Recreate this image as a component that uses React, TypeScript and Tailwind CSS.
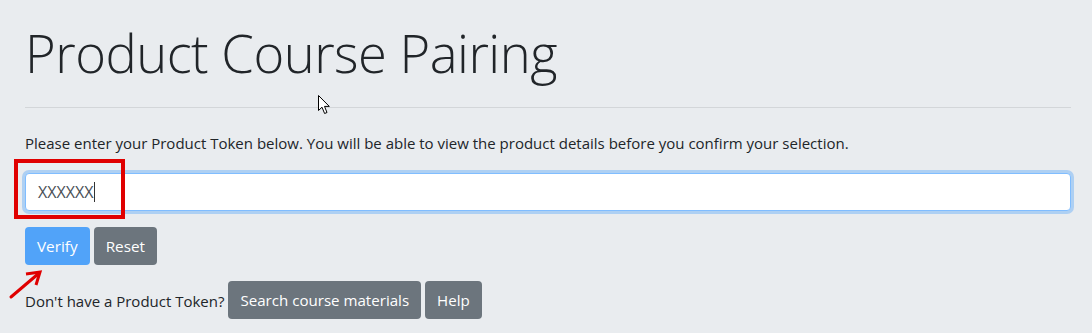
export default function App() {
  return (
    <div
      className="relative min-h-screen bg-[#e9ecef] pl-[25px] pr-[21px] pt-[21px] text-[#212529]"
      style={{ fontFamily: '"Open Sans", "Noto Sans", sans-serif' }}
    >
      <h1 className="text-[52.5px] font-light leading-[1.2] tracking-[-0.5px] text-[#212529]">
        Product Course Pairing
      </h1>
      <hr className="mt-[23px] mb-[25px] border-t border-[#d3d6d9]" />
      <p className="text-[15px] leading-[20px]">
        Please enter your Product Token below. You will be able to view the product details before you confirm your selection.
      </p>

      <div className="relative mt-[20px]">
        <div className="flex h-[38px] items-center rounded-[4px] border border-[#80bdff] bg-white px-[12px] shadow-[0_0_0_3px_rgba(0,123,255,0.25)]">
          <span className="text-[16px] text-[#495057]">XXXXXX</span>
          <span className="ml-[1px] h-[20px] w-[1px] bg-[#333]" />
        </div>
        <div className="absolute left-[-11px] top-[-14px] h-[60px] w-[111px] border-[4px] border-[#e00000]" />
      </div>

      <div className="mt-[16px] flex gap-[4px]">
        <button className="h-[38px] rounded-[4px] bg-[#51a3f9] px-[12px] text-[15.3px] text-white">
          Verify
        </button>
        <button className="h-[38px] rounded-[4px] bg-[#6c757d] px-[12px] text-[15.3px] text-white">
          Reset
        </button>
      </div>

      <div className="relative mt-[16px] flex items-center gap-[4px]">
        <span className="mt-[2px] text-[15px]">Don't have a Product Token?</span>
        <button className="h-[38px] rounded-[4px] bg-[#6c757d] px-[12px] text-[15.1px] text-white">
          Search course materials
        </button>
        <button className="h-[38px] rounded-[4px] bg-[#6c757d] px-[12px] text-[15.1px] text-white">
          Help
        </button>
        <svg
          className="absolute left-[-17px] top-[-12px]"
          width="36"
          height="32"
          viewBox="0 0 36 32"
        >
          <line x1="3" y1="28" x2="30" y2="5" stroke="#e00000" strokeWidth="3" strokeLinecap="round" />
          <path d="M18 5 L32 3 L28 16" fill="none" stroke="#e00000" strokeWidth="3" strokeLinejoin="miter" />
        </svg>
      </div>

      <svg
        className="absolute left-[318px] top-[95px]"
        width="13"
        height="20"
        viewBox="0 0 13 20"
      >
        <path
          d="M0.5 0.5 L0.5 15.5 L4 12.2 L6.6 18.5 L9 17.5 L6.5 11.4 L11.3 11.4 Z"
          fill="#fff"
          stroke="#000"
          strokeWidth="1"
        />
      </svg>
    </div>
  );
}
